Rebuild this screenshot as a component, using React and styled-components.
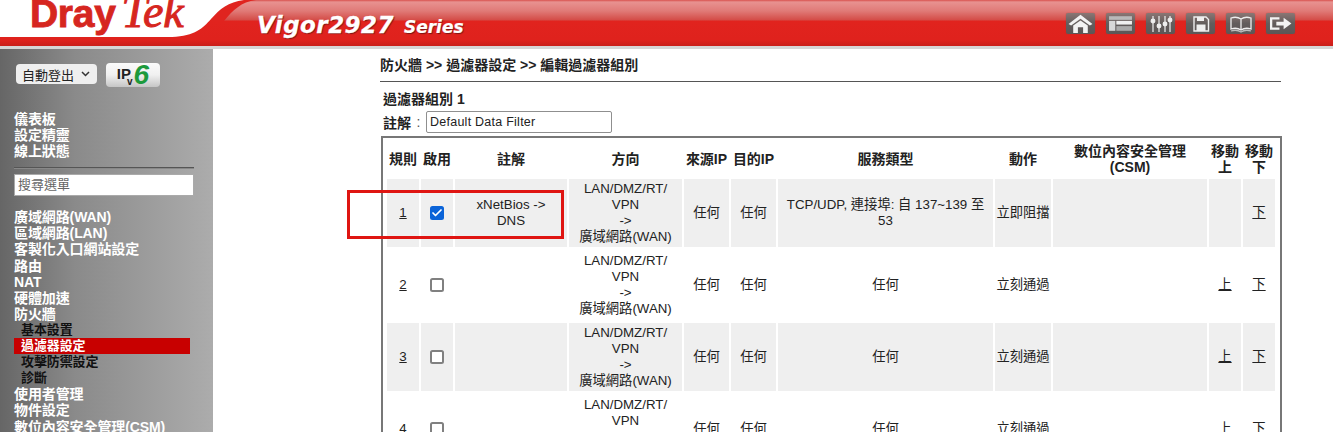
import React from 'react';
import styled, { createGlobalStyle } from 'styled-components';
import { Check } from 'lucide-react';

const Global = createGlobalStyle`
  html, body { margin: 0; padding: 0; background: #fff; overflow: hidden; }
  body { font-family: "Liberation Sans", "Noto Sans CJK TC", Arial, sans-serif; color: #222; }
`;
const Page = styled.div`width: 1333px; height: 432px; overflow: hidden; position: relative;`;
const Header = styled.header`
  position: relative; height: 46px; overflow: hidden;
  border-bottom: 3px solid #d6d6d6; box-sizing: content-box;
  background: linear-gradient(#d9524e 0, #e89290 2px, #e07a77 11px, #d44c47 20px, #e1231e 21px, #df221d 40px, #c91f1a 46px);
  display: flex; align-items: flex-start;
`;
const Swoosh = styled.svg`position: absolute; left: 0; top: 0;`;
const Logo = styled.div`
  position: relative; width: 257px; padding: 0 0 0 30px; box-sizing: border-box;
  display: flex; align-items: baseline; height: 46px; margin-top: -11px;
  color: #d6261f; white-space: nowrap; line-height: 46px;
`;
const LogoDray = styled.span`font: 700 39px/46px "Liberation Sans", sans-serif; -webkit-text-stroke: .9px #d6261f; letter-spacing: -.3px;`;
const LogoTek = styled.span`font: italic 400 46px/46px "Liberation Serif", serif; -webkit-text-stroke: 1px #d6261f; margin-left: 6px;`;
const Model = styled.div`
  position: relative; color: #fff; font-family: "DejaVu Sans", sans-serif; font-weight: 700; font-style: italic;
  display: flex; align-items: baseline; margin-top: 10px; text-shadow: 1px 1px 1px #7a1512; white-space: nowrap;
`;
const ModelName = styled.span`font-size: 23px; line-height: 30px; letter-spacing: .45px; -webkit-text-stroke: .3px #fff;`;
const ModelSeries = styled.span`font-size: 17px; line-height: 30px; margin-left: 10px; -webkit-text-stroke: .2px #fff;`;
const Tools = styled.nav`position: absolute; right: 38px; top: 13px; display: flex; gap: 11px;`;
const Tool = styled.button`
  width: 29px; height: 21px; padding: 0; border: 0; border-radius: 2px;
  background: linear-gradient(#8b7674, #625d5c 50%, #5c5656); box-shadow: 0 0 1px #8a3a38;
  display: flex; align-items: center; justify-content: center;
`;
const Body = styled.div`display: flex; height: 383px;`;
const Side = styled.aside`
  width: 213px; flex: none; box-sizing: border-box; padding: 14px 0 0 14px;
  background: linear-gradient(90deg, #666 0, #8a8a8a 35%, #acacac 100%);
`;
const Top = styled.div`display: flex; align-items: center; gap: 9px; margin: 0 0 0 2px; height: 24px;`;
const Sel = styled.div`
  width: 81px; height: 20px; margin-bottom: 2px; box-sizing: border-box; background: #efefef; border-radius: 4px;
  font-size: 13px; color: #222; display: flex; align-items: center; padding-left: 6px; gap: 7px;
`;
const Ipv = styled.div`
  width: 54px; height: 24px; box-sizing: border-box; border-radius: 4px;
  background: linear-gradient(#fbfbfb, #f0f0f0 50%, #c6c6c6);
  display: flex; justify-content: center;
  font: 700 15px/1 "Liberation Sans", sans-serif; color: #222;
`;
const IpText = styled.span`line-height: 12px; margin-top: 5px; height: 12px;`;
const V = styled.span`font-size: 10px; line-height: 7px; height: 7px; align-self: flex-end; margin: 0 0 2px -4px;`;
const Six = styled.span`color: #1c9a3c; font: italic 700 28px/24px "Liberation Sans", sans-serif; margin-left: 1px;`;
const Menu = styled.ul`list-style: none; padding: 0; margin: ${p => p.$mt}px 0 0 0;`;
const Item = styled.li`
  height: 16.1px; line-height: 16px; font-weight: 700; white-space: nowrap;
  letter-spacing: -.1px; color: ${p => (p.$sub && !p.$active ? '#111' : '#fff')};
  width: 176px; padding-left: ${p => (p.$sub ? 7 : 0)}px; box-sizing: border-box;
  font-size: ${p => (p.$sub ? 13 : 14)}px;
  background: ${p => (p.$active ? '#c80000' : 'transparent')};
`;
const Rule = styled.div`width: 180px; height: 1px; background: #555; margin: 8px 0 5px; border-bottom: 1px solid #888;`;
const Search = styled.div`
  width: 180px; height: 22px; box-sizing: border-box; background: #fff; border: 1px solid #aaa;
  padding-left: 3px; line-height: 20px; font-size: 13px; color: #666;
`;
const Main = styled.main`margin-left: 167px; width: 901px; padding-top: 8px; position: relative;`;
const Crumb = styled.div`
  font-size: 14px; font-weight: 700; color: #222; line-height: 17px;
  padding-bottom: 7px; border-bottom: 1px solid #555; width: 901px; white-space: nowrap;
`;
const GroupTitle = styled.div`font-size: 14px; font-weight: 700; color: #222; line-height: 16px; margin: 9px 0 0 3px;`;
const NoteRow = styled.div`display: flex; align-items: center; font-size: 14px; margin: 4px 0 3px 3px; height: 22px;`;
const NoteLabel = styled.span`font-weight: 700;`;
const Colon = styled.span`width: 15px; text-align: center; color: #555;`;
const NoteInput = styled.div`
  width: 186px; height: 22px; box-sizing: border-box; border: 1px solid #8f8f8f; border-radius: 2px;
  padding-left: 3px; line-height: 21px; font-size: 12.5px; letter-spacing: .25px; color: #222;
`;
const Table = styled.table`
  border: 1px solid #777; border-width: 2px 2px 0 2px; border-spacing: 2px 4px; table-layout: fixed; width: 901px; margin-left: 1px;
  border-collapse: separate; font-size: 13.3px; color: #222; padding: 0 3px 0 2px;
`;
const Th = styled.th`
  height: 33px; padding: 0; font-size: 14px; font-weight: 700; line-height: 16px; text-align: center; color: #222;
  vertical-align: middle; width: ${p => p.$w}px;
`;
const Td = styled.td`
  padding: 0; height: 68px; text-align: center; vertical-align: middle; line-height: 16px; font-size: 13.3px;
  background: ${p => (p.$shade ? '#efefef' : 'transparent')};
`;
const Link = styled.span`text-decoration: underline; color: #222;`;
const Box = styled.span`
  display: inline-flex; width: 14px; height: 14px; box-sizing: border-box; border-radius: 2.5px; vertical-align: middle;
  align-items: center; justify-content: center; background: ${p => (p.$on ? '#0a63d8' : '#fff')};
  border: ${p => (p.$on ? '0' : '2px solid #808080')};
`;
const Mark = styled.div`
  position: absolute; left: 347px; top: 190px; width: 217px; height: 49px; box-sizing: border-box;
  border: 3px solid #df1512; pointer-events: none;
`;

const Icon = ({ children }) => (
  <svg width="24" height="18" viewBox="0 0 24 18" fill="none" stroke="#eee" strokeWidth="1.3">{children}</svg>
);
const icons = [
  <svg key="h" width="25" height="19" viewBox="0 0 24 18"><path d="M12 0.500 L23.500 9.500 L21 11 L12 4.500 L3 11 L0.500 9.500Z" fill="#f3f3f3"/><path d="M5 11 L12 6 L19 11 V18 H14.500 V12.500 H9.500 V18 H5Z" fill="#f3f3f3"/></svg>,
  <svg key="t" width="25" height="17" viewBox="0 0 24 16"><rect x="1" y="1" width="22" height="3.500" fill="#b9b9b9"/><rect x="1" y="5.500" width="6" height="9.500" fill="#d8d8d8"/><rect x="8" y="5.500" width="15" height="3.500" fill="#f0f0f0"/><rect x="8" y="10.500" width="15" height="4.500" fill="#aaa"/></svg>,
  <Icon key="s"><path d="M4 1v16M10 1v16M16 1v16M21 1v16" strokeWidth="1.200"/><circle cx="4" cy="6" r="1.800" fill="#eee"/><circle cx="10" cy="11" r="1.800" fill="#eee"/><circle cx="16" cy="9" r="1.800" fill="#eee"/><circle cx="21" cy="5" r="1.800" fill="#eee"/></Icon>,
  <Icon key="d"><path d="M5 2h12l2.500 2.500V16H5Z" strokeWidth="1.400"/><rect x="8" y="2" width="7" height="4" fill="#eee" stroke="none"/><rect x="7.500" y="9.500" width="9" height="6.500" fill="#eee" stroke="none"/></Icon>,
  <Icon key="b"><path d="M12 4C9 2 5 2 2 3V14C5 13 9 13 12 15C15 13 19 13 22 14V3C19 2 15 2 12 4ZM12 4V15"/><path d="M2 16C5 15 9 15 12 17C15 15 19 15 22 16" stroke="#bbb"/></Icon>,
  <svg key="e" width="25" height="17" viewBox="0 0 24 16" fill="none"><path d="M11 3H3V13H11" stroke="#f3f3f3" strokeWidth="2.200"/><path d="M8 6.200H15V2.500L22.500 8L15 13.500V9.800H8Z" fill="#f3f3f3"/></svg>,
];

const cols = [
  { t: '規則', w: 32 }, { t: '啟用', w: 32 }, { t: '註解', w: 112 }, { t: '方向', w: 113 },
  { t: '來源IP', w: 45 }, { t: '目的IP', w: 45 }, { t: '服務類型', w: 215 }, { t: '動作', w: 56 },
  { t: <>數位內容安全管理<br />(CSM)</>, w: 154 }, { t: <>移動<br />上</>, w: 32 }, { t: <>移動<br />下</>, w: 32 },
];
const rows = [
  { n: 1, on: true, note: <>xNetBios -&gt;<br />DNS</>, svc: 'TCP/UDP, 連接埠: 自 137~139 至 53', act: '立即阻擋', up: false },
  { n: 2, on: false, note: '', svc: '任何', act: '立刻通過', up: true },
  { n: 3, on: false, note: '', svc: '任何', act: '立刻通過', up: true },
  { n: 4, on: false, note: '', svc: '任何', act: '立刻通過', up: true },
];
const top = ['儀表板', '設定精靈', '線上狀態'];
const menu = [
  { t: '廣域網路(WAN)' }, { t: '區域網路(LAN)' }, { t: '客製化入口網站設定' }, { t: '路由' }, { t: 'NAT' }, { t: '硬體加速' }, { t: '防火牆' },
  { t: '基本設置', sub: 1 }, { t: '過濾器設定', sub: 1, active: 1 }, { t: '攻擊防禦設定', sub: 1 }, { t: '診斷', sub: 1 },
  { t: '使用者管理' }, { t: '物件設定' }, { t: '數位內容安全管理(CSM)' },
];

export default function App() {
  return (
    <Page>
      <Global />
      <Header>
        <Swoosh width="1333" height="46" viewBox="0 0 1333 46">
          <path d="M232 0H256C241 2 233 10 224 21H196Z" fill="#e0241f" />
          <path d="M0 0H244C228 2 220 9 211 19C203 28 195 36 172 37H0Z" fill="#fff" />
        </Swoosh>
        <Logo><LogoDray>Dray</LogoDray><LogoTek>Tek</LogoTek></Logo>
        <Model><ModelName>Vigor2927</ModelName><ModelSeries>Series</ModelSeries></Model>
        <Tools>{icons.map((ic, i) => <Tool key={i}>{ic}</Tool>)}</Tools>
      </Header>
      <Body>
        <Side>
          <Top>
            <Sel>自動登出 <svg width="9" height="6" viewBox="0 0 9 6" fill="none" stroke="#333" strokeWidth="1.500"><path d="M1 1l3.500 3.500L8 1" /></svg></Sel>
            <Ipv><IpText>IP</IpText><V>v</V><Six>6</Six></Ipv>
          </Top>
          <Menu $mt={24}>{top.map(t => <Item key={t}>{t}</Item>)}</Menu>
          <Rule />
          <Search>搜尋選單</Search>
          <Menu $mt={13}>{menu.map(m => <Item key={m.t} $sub={m.sub} $active={m.active}>{m.t}</Item>)}</Menu>
        </Side>
        <Main>
          <Crumb>防火牆 &gt;&gt; 過濾器設定 &gt;&gt; 編輯過濾器組別</Crumb>
          <GroupTitle>過濾器組別 1</GroupTitle>
          <NoteRow><NoteLabel>註解</NoteLabel><Colon>:</Colon><NoteInput>Default Data Filter</NoteInput></NoteRow>
          <Table>
            <thead><tr>{cols.map((c, i) => <Th key={i} $w={c.w}>{c.t}</Th>)}</tr></thead>
            <tbody>
              {rows.map((r, i) => {
                const s = i % 2 === 0;
                return (
                  <tr key={r.n}>
                    <Td $shade={s}><Link>{r.n}</Link></Td>
                    <Td $shade={s}><Box $on={r.on}>{r.on && <Check size={12} color="#fff" strokeWidth={3.5} />}</Box></Td>
                    <Td $shade={s}>{r.note}</Td>
                    <Td $shade={s}>LAN/DMZ/RT/<br />VPN<br />-&gt;<br />廣域網路(WAN)</Td>
                    <Td $shade={s}>任何</Td>
                    <Td $shade={s}>任何</Td>
                    <Td $shade={s}>{r.svc}</Td>
                    <Td $shade={s}>{r.act}</Td>
                    <Td $shade={s} />
                    <Td $shade={s}>{r.up && <Link>上</Link>}</Td>
                    <Td $shade={s}><Link>下</Link></Td>
                  </tr>
                );
              })}
            </tbody>
          </Table>
        </Main>
      </Body>
      <Mark />
    </Page>
  );
}
